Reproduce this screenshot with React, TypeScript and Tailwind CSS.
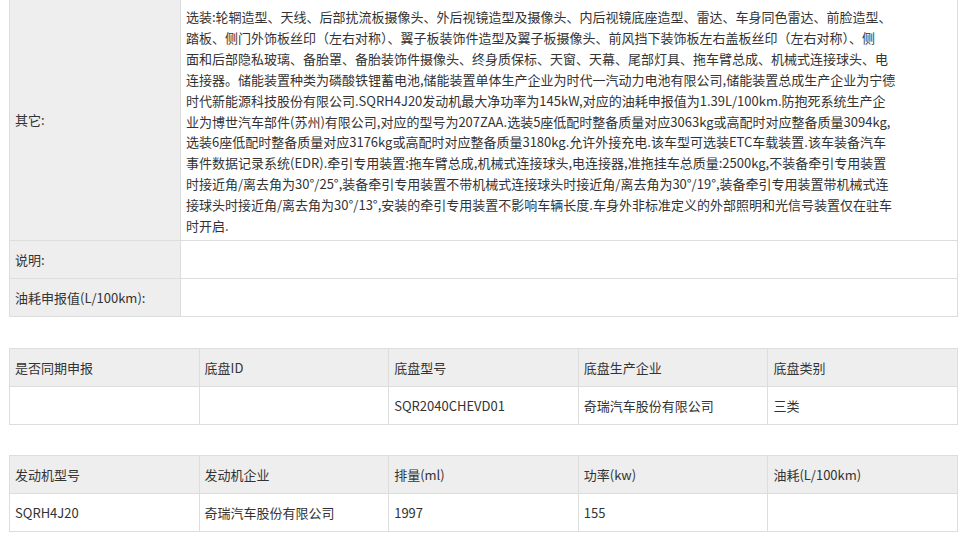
const LINES = [
  "选装:轮辋造型、天线、后部扰流板摄像头、外后视镜造型及摄像头、内后视镜底座造型、雷达、车身同色雷达、前脸造型、",
  "踏板、侧门外饰板丝印（左右对称）、翼子板装饰件造型及翼子板摄像头、前风挡下装饰板左右盖板丝印（左右对称）、侧",
  "面和后部隐私玻璃、备胎罩、备胎装饰件摄像头、终身质保标、天窗、天幕、尾部灯具、拖车臂总成、机械式连接球头、电",
  "连接器。储能装置种类为磷酸铁锂蓄电池,储能装置单体生产企业为时代一汽动力电池有限公司,储能装置总成生产企业为宁德",
  "时代新能源科技股份有限公司.SQRH4J20发动机最大净功率为145kW,对应的油耗申报值为1.39L/100km.防抱死系统生产企",
  "业为博世汽车部件(苏州)有限公司,对应的型号为207ZAA.选装5座低配时整备质量对应3063kg或高配时对应整备质量3094kg,",
  "选装6座低配时整备质量对应3176kg或高配时对应整备质量3180kg.允许外接充电.该车型可选装ETC车载装置.该车装备汽车",
  "事件数据记录系统(EDR).牵引专用装置:拖车臂总成,机械式连接球头,电连接器,准拖挂车总质量:2500kg,不装备牵引专用装置",
  "时接近角/离去角为30°/25°,装备牵引专用装置不带机械式连接球头时接近角/离去角为30°/19°,装备牵引专用装置带机械式连",
  "接球头时接近角/离去角为30°/13°,安装的牵引专用装置不影响车辆长度.车身外非标准定义的外部照明和光信号装置仅在驻车",
  "时开启.",
];

function Grid({ head, row }: { head: string[]; row: string[] }) {
  return (
    <div className="grid grid-cols-5 border-l border-t border-[#dddddd]">
      {head.map((h, i) => (
        <div key={"h" + i} className="flex h-[38px] items-center border-b border-r border-[#dddddd] bg-[#eeeeee] px-[5px]">
          {h}
        </div>
      ))}
      {row.map((c, i) => (
        <div key={"r" + i} className="flex h-[38px] items-center border-b border-r border-[#dddddd] bg-white px-[5px]">
          {c}
        </div>
      ))}
    </div>
  );
}

export default function App() {
  return (
    <div
      className="w-[972px] bg-white pl-[9px] pr-[14px] text-[13px] text-[#333333]"
      style={{ fontFamily: '"Microsoft YaHei", "Noto Sans CJK SC", sans-serif' }}
    >
      {/* 其它信息 */}
      <div className="border-l border-[#dddddd]">
        <div className="flex border-b border-[#dddddd]">
          <div className="flex w-[170px] shrink-0 items-center bg-[#eeeeee] px-[5px]">其它:</div>
          <div className="flex-1 border-l border-r border-[#dddddd] px-[5px] pt-[7px] pb-[3px] leading-[20.9px] whitespace-nowrap">
            {LINES.map((l, i) => (
              <div key={i}>{l}</div>
            ))}
          </div>
        </div>
        <div className="flex h-[38px] border-b border-[#dddddd]">
          <div className="flex w-[170px] shrink-0 items-center bg-[#eeeeee] px-[5px]">说明:</div>
          <div className="flex-1 border-l border-r border-[#dddddd]" />
        </div>
        <div className="flex h-[38px] border-b border-[#dddddd]">
          <div className="flex w-[170px] shrink-0 items-center bg-[#eeeeee] px-[5px]">油耗申报值(L/100km):</div>
          <div className="flex-1 border-l border-r border-[#dddddd]" />
        </div>
      </div>

      <div className="mt-[31px]">
        <Grid
          head={["是否同期申报", "底盘ID", "底盘型号", "底盘生产企业", "底盘类别"]}
          row={["", "", "SQR2040CHEVD01", "奇瑞汽车股份有限公司", "三类"]}
        />
      </div>

      <div className="mt-[30px] pb-[7px]">
        <Grid
          head={["发动机型号", "发动机企业", "排量(ml)", "功率(kw)", "油耗(L/100km)"]}
          row={["SQRH4J20", "奇瑞汽车股份有限公司", "1997", "155", ""]}
        />
      </div>
    </div>
  );
}
